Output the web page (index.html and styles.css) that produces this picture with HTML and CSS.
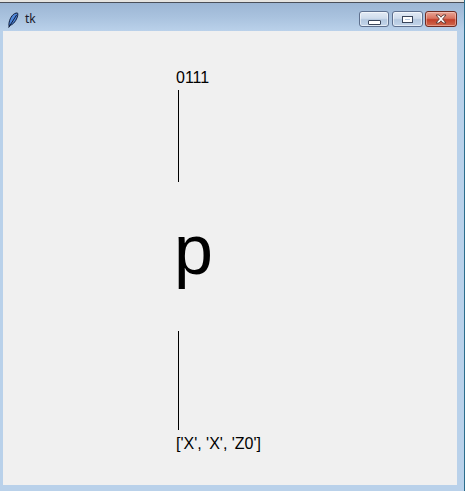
FILE: index.html
```html
<!DOCTYPE html>
<html>
<head>
<meta charset="utf-8">
<link rel="stylesheet" href="styles.css">
</head>
<body>
<div class="window">
  <div class="topstrip"></div>
  <div class="titlebar">
    <svg class="feather" width="12" height="16" viewBox="0 0 12 16">
      <path d="M2.2 14.6 C1.2 11.5 3 5.5 6.2 2.6 C8 1 10.4 0.6 10.8 1.4 C11.2 3.4 9.6 8.2 6.6 11.2 C5.2 12.6 3.6 13.2 2.6 13.4 Z" fill="#4f86d8" stroke="#0d1b3a" stroke-width="1"/>
      <path d="M1.6 15.6 L9.6 3" stroke="#0d1b3a" stroke-width="1" fill="none"/>
    </svg>
    <span class="title">tk</span>
    <div class="buttons">
      <div class="btn btn-min"><span class="glyph-min"></span></div>
      <div class="btn btn-max"><span class="glyph-max"></span></div>
      <div class="btn btn-close">
        <svg width="14" height="10" viewBox="0 0 14 10">
          <path d="M2 1 L5 1 L7 3.2 L9 1 L12 1 L8.6 5 L12 9 L9 9 L7 6.8 L5 9 L2 9 L5.4 5 Z" fill="#ffffff" stroke="#5a3530" stroke-width="0.9" stroke-linejoin="round"/>
        </svg>
      </div>
    </div>
  </div>
  <div class="frame">
    <div class="client">
      <div class="label top-label">0111</div>
      <div class="vline vline-top"></div>
      <div class="big">p</div>
      <div class="vline vline-bottom"></div>
      <div class="label bottom-label">['X', 'X', 'Z0']</div>
    </div>
  </div>
</div>
</body>
</html>
```
FILE: styles.css
```css
html, body {
  margin: 0;
  padding: 0;
}
body {
  width: 465px;
  height: 491px;
  overflow: hidden;
  background: #b9d1ea;
}
.window {
  width: 465px;
  height: 491px;
  box-sizing: border-box;
  display: flex;
  flex-direction: column;
  background: #b9d1ea;
  border-right: 1px solid #2b6d8c;
}
.topstrip {
  height: 2px;
  background: #e6e4e0;
  border-bottom: 1px solid #4a4f58;
}
.titlebar {
  height: 28px;
  display: flex;
  align-items: flex-start;
  background: linear-gradient(to bottom, #9cb6d4 0%, #a9c2de 50%, #bad1ea 100%);
  box-sizing: border-box;
  padding-left: 7px;
}
.feather {
  margin-top: 9px;
  display: block;
}
.title {
  margin-left: 6px;
  margin-top: 9px;
  font-family: "Noto Sans", "DejaVu Sans", sans-serif;
  font-size: 12px;
  line-height: 14px;
  color: #1a1a2a;
}
.buttons {
  margin-left: auto;
  margin-right: 7px;
  margin-top: 8px;
  display: flex;
}
.btn {
  height: 16px;
  box-sizing: border-box;
  border: 1px solid #5e708e;
  border-radius: 3px;
  display: flex;
  align-items: center;
  justify-content: center;
  box-shadow: inset 0 0 0 1px rgba(255,255,255,0.55);
}
.btn-min, .btn-max {
  background: linear-gradient(to bottom, #e3ebf5 0%, #cfdcec 45%, #b4c8df 55%, #c3d5ea 100%);
}
.btn-min {
  width: 30px;
  margin-right: 3px;
}
.btn-max {
  width: 31px;
  margin-right: 2px;
}
.btn-close {
  width: 32px;
  border-color: #6e2b22;
  background: linear-gradient(to bottom, #e8a596 0%, #d9735f 45%, #c2402a 55%, #d0694f 100%);
  box-shadow: inset 0 0 0 1px rgba(255,220,210,0.45);
}
.glyph-min {
  display: block;
  width: 11px;
  height: 3px;
  margin-top: 6px;
  background: #ffffff;
  border: 1px solid #39455a;
  border-radius: 1px;
}
.glyph-max {
  display: block;
  width: 9px;
  height: 5px;
  box-sizing: border-box;
  border: 2px solid #ffffff;
  outline: 1px solid #39455a;
  border-top-width: 2px;
}
.btn-close svg {
  display: block;
}
.frame {
  flex: 1;
  display: flex;
  padding: 0 7px 6px 3px;
}
.client {
  flex: 1;
  background: #f0f0f0;
  display: flex;
  flex-direction: column;
  align-items: flex-start;
  padding-left: 173px;
}
.label {
  font-family: "Liberation Sans", Arial, sans-serif;
  font-size: 16px;
  line-height: 18px;
  color: #000000;
  white-space: pre;
}
.top-label {
  margin-top: 38px;
}
.vline {
  width: 1px;
  background: #000000;
  margin-left: 2px;
}
.vline-top {
  margin-top: 3px;
  height: 92px;
}
.big {
  font-family: "Liberation Sans", Arial, sans-serif;
  font-size: 70px;
  line-height: 80px;
  margin-top: 28px;
  margin-left: -2px;
  color: #000000;
}
.vline-bottom {
  margin-top: 41px;
  height: 99px;
}
.bottom-label {
  margin-top: 5px;
}
```
